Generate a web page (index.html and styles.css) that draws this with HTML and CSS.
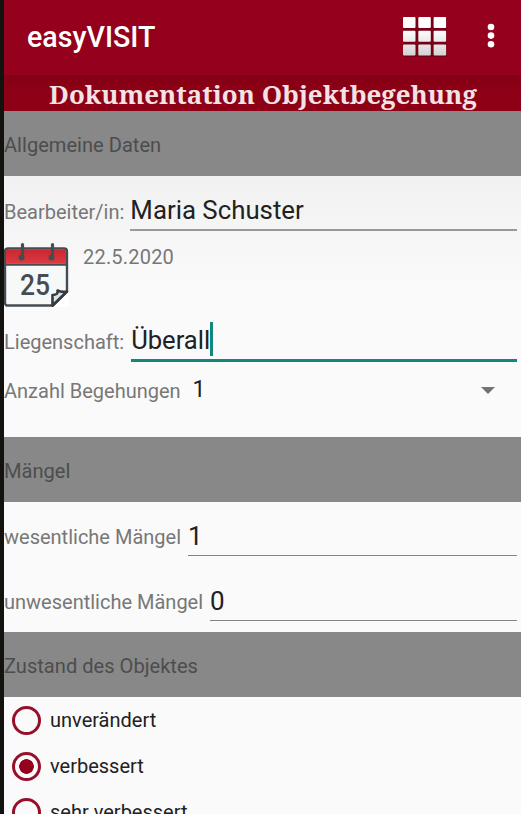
FILE: index.html
```
<!DOCTYPE html>
<html lang="de">
<head>
	<meta charset="utf-8">
	<title>easyVISIT</title>
	<link rel="stylesheet" href="styles.css">
</head>
<body>
	<header class="toolbar">
		<h1>easyVISIT</h1>
		<svg class="kacheln" width="46" height="42" viewBox="0 0 46 42">
			<defs>
				<linearGradient id="hell" x1="0" y1="0" x2="0" y2="42" gradientUnits="userSpaceOnUse">
					<stop offset="0.3" stop-color="#fff"/>
					<stop offset="1" stop-color="#d0cfd0"/>
				</linearGradient>
			</defs>
			<path fill="#500010" opacity=".45" d="M1 1h43.500v40H1z"/>
			<g fill="url(#hell)">
				<rect x="1" y="1" width="12.500" height="11" rx="1"/>
				<rect x="16.300" y="1" width="12.500" height="11" rx="1"/>
				<rect x="31.600" y="1" width="12.500" height="11" rx="1"/>
				<rect x="1" y="14.700" width="12.500" height="11" rx="1"/>
				<rect x="16.300" y="14.700" width="12.500" height="11" rx="1"/>
				<rect x="31.600" y="14.700" width="12.500" height="11" rx="1"/>
				<rect x="1" y="28.500" width="12.500" height="11" rx="1"/>
				<rect x="16.300" y="28.500" width="12.500" height="11" rx="1"/>
				<rect x="31.600" y="28.500" width="12.500" height="11" rx="1"/>
			</g>
		</svg>
		<svg class="punkte" width="8" height="26" viewBox="0 0 8 26" fill="#fff">
			<circle cx="4" cy="4" r="3.3"/>
			<circle cx="4" cy="12.6" r="3.3"/>
			<circle cx="4" cy="21.2" r="3.3"/>
		</svg>
	</header>
	<div class="titel"><span>Dokumentation Objektbegehung</span></div>

	<h2 class="abschnitt">Allgemeine Daten</h2>
	<div class="daten">
		<div class="zeile bearbeiter">
			<label>Bearbeiter/in:</label>
			<div class="feld">Maria Schuster</div>
		</div>
		<div class="datum">
			<svg width="66" height="67" viewBox="0 0 66 67">
				<defs>
					<linearGradient id="rot" x1="0" y1="0" x2="0" y2="1">
						<stop offset="0" stop-color="#c92630"/>
						<stop offset="1" stop-color="#dc3942"/>
					</linearGradient>
				</defs>
				<path fill="#fff" d="M0 7h65v59H0z"/>
				<path fill="#f7f8f8" stroke="#454c52" stroke-width="2.400" d="M4 7.500h56q3 0 3 3v40L49 64.500H4q-3 0-3-3v-51q0-3 3-3z"/>
				<path fill="url(#rot)" d="M4 8.500h56q2 0 2 2V22H2V10.500q0-2 2-2z"/>
				<path stroke="#454c52" stroke-width="2.400" d="M1 23.500h62"/>
				<path fill="#dfe2e4" stroke="#343b41" stroke-width="2.600" stroke-linejoin="round" d="M48.500 64.500V54q6 0 5-4.500 4 2 9.500 1z"/>
				<circle cx="17.500" cy="16.500" r="3" fill="#454c52"/>
				<circle cx="47.500" cy="16.500" r="3" fill="#454c52"/>
				<path stroke="#454c52" stroke-width="3.200" stroke-linecap="round" d="M18.500 3.500v13M48.500 3.500v13"/>
				<text x="16" y="54" class="tag" textLength="30" lengthAdjust="spacingAndGlyphs">25</text>
			</svg>
			<span>22.5.2020</span>
		</div>
		<div class="zeile liegenschaft">
			<label>Liegenschaft:</label>
			<div class="feld aktiv">Überall<i class="cursor"></i></div>
		</div>
		<div class="zeile anzahl">
			<label>Anzahl Begehungen</label>
			<div class="auswahl">1</div>
		</div>
	</div>

	<h2 class="abschnitt">Mängel</h2>
	<div class="maengel">
		<div class="zeile">
			<label>wesentliche Mängel</label>
			<div class="feld">1</div>
		</div>
		<div class="zeile">
			<label>unwesentliche Mängel</label>
			<div class="feld">0</div>
		</div>
	</div>

	<h2 class="abschnitt">Zustand des Objektes</h2>
	<div class="zustand">
		<div class="option"><span class="kreis"></span>unverändert</div>
		<div class="option"><span class="kreis gewaehlt"></span>verbessert</div>
		<div class="option"><span class="kreis"></span>sehr verbessert</div>
	</div>
</body>
</html>
```

FILE: styles.css
```
*{box-sizing: border-box;}
body{
	margin: 0;
	height: 814px;
	overflow: hidden;
	border-left: 4px solid #14120f;
	background-color: #fafafa;
	color: #777;
	font-family: Roboto, "Liberation Sans", sans-serif;
	font-size: 20px;
}
h1, h2{
	margin: 0;
	font-weight: normal;
}
.toolbar{
	display: flex;
	align-items: center;
	height: 75px;
	padding: 0 26px 2px 23px;
	background-color: #95001c;
}
.toolbar h1{
	flex: 1;
	color: white;
	font-size: 28.6px;
	font-weight: 500;
}
.kacheln{ margin-right: 39px; }
.punkte{ margin-top: -1px; }
.titel{
	height: 36px;
	padding-left: 1px;
	line-height: 38px;
	background: linear-gradient(#840014, #8d0016 40%);
	color: #f3e3e5;
	text-align: center;
	white-space: nowrap;
	font-family: "Noto Serif", "DejaVu Serif", serif;
	font-size: 25.9px;
	font-weight: bold;
}
.abschnitt{
	height: 65px;
	line-height: 69px;
	background-color: #888;
	color: #4d4d4d;
	font-size: 20.1px;
}
.daten{
	height: 261px;
	background: linear-gradient(#f1f1f1, #fafafa 110px);
}
.zeile{
	display: flex;
	height: 65px;
	padding-right: 4px;
	line-height: 70px;
	white-space: nowrap;
}
.feld{
	flex: 1;
	height: 54px;
	margin-left: 6px;
	line-height: 68px;
	border-bottom: 1px solid #828282;
	color: #212121;
	font-size: 26px;
}
.maengel .feld{ margin-left: 7px; }
.bearbeiter{ line-height: 72px; }
.bearbeiter .feld{
	height: 55px;
	line-height: 69px;
	border-bottom-width: 2px;
	border-bottom-color: #999;
	font-size: 25.8px;
}
.liegenschaft{ line-height: 73px; }
.feld.aktiv{
	height: 56px;
	margin-left: 7px;
	line-height: 69px;
	border-bottom: 3px solid #12877b;
	font-size: 25.6px;
}
.cursor{
	display: inline-block;
	width: 3px;
	height: 34px;
	vertical-align: -7px;
	background-color: #12877b;
}
.datum{
	display: flex;
	height: 65px;
}
.datum span{
	margin: 4px 0 0 13px;
	letter-spacing: .2px;
}
.tag{
	fill: #454c52;
	font-size: 29px;
	font-weight: 500;
}
.anzahl{
	height: 38px;
	line-height: 40px;
}
.auswahl{
	display: flex;
	flex: 1;
	justify-content: space-between;
	padding: 0 22px 0 12px;
	line-height: 38px;
	color: #212121;
	font-size: 23px;
}
.auswahl::after{
	content: "";
	align-self: center;
	border: 7px solid transparent;
	border-top-color: #737373;
	border-bottom: 0;
}
.maengel{ height: 130px; }
.option{
	display: flex;
	align-items: center;
	height: 46px;
	padding-left: 8px;
	line-height: 48px;
	color: #212121;
}
.kreis{
	width: 29px;
	height: 29px;
	margin-right: 9px;
	border: 3px solid #960f2b;
	border-radius: 50%;
}
.gewaehlt{
	background: radial-gradient(circle, #95001c 7px, transparent 7.6px);
}
```
